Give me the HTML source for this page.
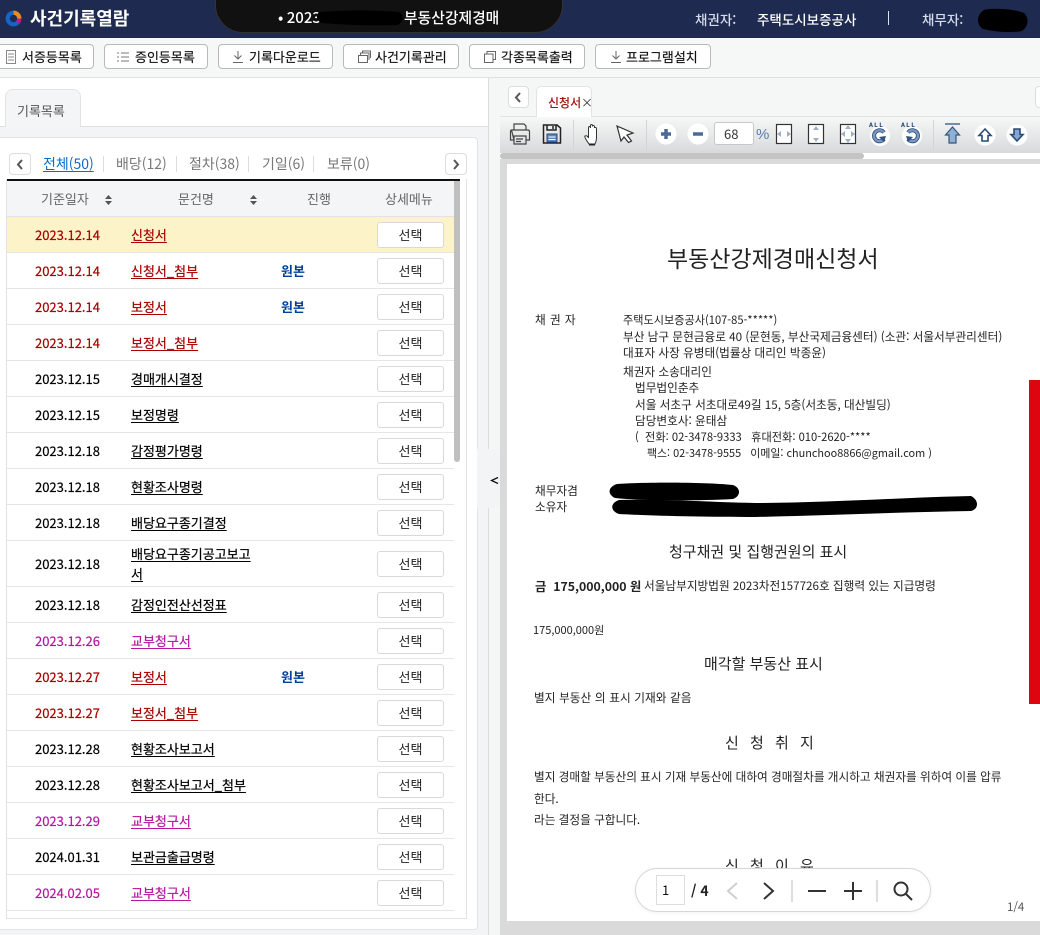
<!DOCTYPE html>
<html lang="ko"><head><meta charset="utf-8"><title>사건기록열람</title>
<style>
*{box-sizing:border-box}
html,body{margin:0;padding:0}
body{width:1040px;height:935px;position:relative;overflow:hidden;background:#f3f4f6;font-family:"Liberation Sans","Noto Sans CJK KR",sans-serif;color:#111}
.a,.t,.b,.d,.n,.s,.dt,.p{position:absolute;white-space:nowrap}
.k{font-family:"Noto Sans CJK KR","Liberation Sans",sans-serif}
.t{font-family:"Noto Sans CJK KR",sans-serif}
.b{top:44px;height:25px;background:#fff;border:1px solid #b9b9b9;border-radius:4px;font:13px/23px "Noto Sans CJK KR",sans-serif;color:#111;-webkit-text-stroke:.15px #111}
.b span{position:absolute;top:0}
.b svg{position:absolute;top:5px}
.l{position:absolute;left:7px;width:447px;height:1px;background:#e6e6e6}
.d{left:35px;font:13px/18px "Noto Sans CJK KR",sans-serif;color:#000;-webkit-text-stroke:.2px currentColor}
.n{left:131px;font:13px/18px "Noto Sans CJK KR",sans-serif;color:#000;text-decoration:underline;text-underline-offset:2px;-webkit-text-stroke:.2px currentColor}
.s{left:377px;width:67px;height:26px;background:#fff;border:1px solid #d9d9d9;border-radius:3px;font:13px/24px "Noto Sans CJK KR",sans-serif;text-align:center;color:#222}
.w{position:absolute;left:281px;font:bold 13px/18px "Noto Sans CJK KR",sans-serif;color:#003f9a}
.r{color:#a60000!important}
.m{color:#b3179f!important}
.p{font:11.65px/14px "Noto Sans CJK KR",sans-serif;color:#222}
.h{position:absolute;font:15px/20px "Noto Sans CJK KR",sans-serif;color:#222;white-space:nowrap}
.sep{position:absolute;top:156px;width:1px;height:16px;background:#ddd}
.ic{position:absolute}
</style></head><body>

<!-- header -->
<div class="a" style="left:0;top:0;width:1040px;height:38px;background:#1e2a50"></div>
<svg class="ic" style="left:5px;top:10px" width="17" height="17" viewBox="0 0 17 17"><circle cx="8.5" cy="8.5" r="5.8" fill="none" stroke="#1565c8" stroke-width="4.2"/><path d="M8.5 2.7A5.8 5.8 0 0 1 14.3 8.5" fill="none" stroke="#f08a12" stroke-width="4.2"/><path d="M14.3 8.5A5.8 5.8 0 0 1 12.500 12.700" fill="none" stroke="#c0188c" stroke-width="4.2"/></svg>
<div class="t" style="left:30px;top:6px;font-size:18px;line-height:25px;font-weight:700;color:#fff">사건기록열람</div>
<div class="a" style="left:215px;top:-30px;width:348px;height:63px;background:#111;border-radius:0 0 28px 28px;border:1px solid #333"></div>
<div class="t" style="left:278px;top:8px;font-size:15px;line-height:20px;color:#fff;font-weight:500">• 2023</div>
<svg class="ic" style="left:315px;top:8px" width="92" height="20"><path d="M4 4C30 2 60 2 84 4C90 8 88 15 82 17C60 18 30 17 6 15C1 12 1 7 4 4Z" fill="#000"/></svg>
<div class="t" style="left:404px;top:8px;font-size:14.8px;line-height:20px;color:#fff;font-weight:500">부동산강제경매</div>
<div class="t" style="left:695px;top:9px;font-size:13.5px;line-height:20px;color:#d5dcec;font-weight:500">채권자:</div>
<div class="t" style="left:757px;top:9px;font-size:13.5px;line-height:20px;color:#fff;font-weight:500">주택도시보증공사</div>
<div class="a" style="left:888px;top:11px;width:1px;height:14px;background:#dfe3ee"></div>
<div class="t" style="left:922px;top:9px;font-size:13.5px;line-height:20px;color:#d5dcec;font-weight:500">채무자:</div>
<svg class="ic" style="left:975px;top:7px" width="56" height="27"><path d="M10 2.500C22 1 40 2 49 6C54 11 54 19 47 24C36 26 20 25 8 22C1 18 1 7 10 2.500Z" fill="#000"/></svg>

<!-- toolbar -->
<div class="a" style="left:0;top:38px;width:1040px;height:40px;background:#f6f8f7;border-bottom:1px solid #dfe1e1"></div>
<div class="b" style="left:-4px;width:98px"><svg style="left:9px" width="10" height="14" viewBox="0 0 10 14" fill="none" stroke="#888"><rect x=".5" y=".5" width="9" height="13"/><path d="M2 4H8M2 7H8M2 10H8"/></svg><span style="left:25px">서증등목록</span></div>
<div class="b" style="left:104px;width:104px"><svg style="left:12px;top:6px" width="12" height="12" viewBox="0 0 12 12" fill="none" stroke="#777"><path d="M0 2H2M4 2H12M0 6H2M4 6H12M0 10H2M4 10H12"/></svg><span style="left:30px">증인등목록</span></div>
<div class="b" style="left:218px;width:115px"><svg style="left:13px" width="12" height="14" viewBox="0 0 12 14" fill="none" stroke="#666"><path d="M6 1V9M2.500 5.500L6 9L9.500 5.500M1 12.500H11"/></svg><span style="left:30px">기록다운로드</span></div>
<div class="b" style="left:343px;width:116px"><svg style="left:14px" width="13" height="13" viewBox="0 0 13 13" fill="none" stroke="#666"><path d="M.5 5.500H9.500V12.500H.5ZM2.500 5V3H11V10M4.500 3V1H12.500V8"/></svg><span style="left:31px">사건기록관리</span></div>
<div class="b" style="left:469px;width:116px"><svg style="left:14px;top:6px" width="12" height="12" viewBox="0 0 12 12" fill="none" stroke="#666"><path d="M3 3V.5H11.500V8.500H9M.5 3H9V11.500H.5Z"/></svg><span style="left:31px">각종목록출력</span></div>
<div class="b" style="left:595px;width:116px"><svg style="left:14px" width="12" height="14" viewBox="0 0 12 14" fill="none" stroke="#666"><path d="M6 1V9M2.500 5.500L6 9L9.500 5.500M1 12.500H11"/></svg><span style="left:30px">프로그램설치</span></div>

<!-- left panel -->
<div class="a" style="left:0;top:78px;width:488px;height:48px;background:#fff"></div>
<div class="a" style="left:0;top:126px;width:488px;height:1px;background:#dfe1e1"></div>
<div class="a" style="left:5px;top:89px;width:76px;height:38px;background:#f4f5f6;border:1px solid #e2e4e4;border-bottom:0;border-radius:8px 8px 0 0"></div>
<div class="t" style="left:17px;top:101px;font-size:13px;line-height:20px;color:#555">기록목록</div>
<div class="a" style="left:-4px;top:137px;width:482px;height:793px;background:#fff;border:1px solid #e3e4e6;border-radius:4px"></div>

<div class="a" style="left:9px;top:153px;width:22px;height:22px;background:#fff;border:1px solid #ddd;border-radius:4px"></div>
<svg class="ic" style="left:16px;top:159px" width="8" height="11" fill="none" stroke="#555" stroke-width="2"><path d="M6 1L2 5.500L6 10"/></svg>
<div class="a" style="left:445px;top:153px;width:22px;height:22px;background:#fff;border:1px solid #ddd;border-radius:4px"></div>
<svg class="ic" style="left:452px;top:159px" width="8" height="11" fill="none" stroke="#555" stroke-width="2"><path d="M2 1L6 5.500L2 10"/></svg>
<div class="h" style="left:43px;top:154px;font-size:14px;color:#0a6cc4;text-decoration:underline;text-underline-offset:2px">전체(50)</div>
<div class="sep" style="left:103px"></div>
<div class="h" style="left:116px;top:154px;font-size:14px;color:#777">배당(12)</div>
<div class="sep" style="left:176px"></div>
<div class="h" style="left:189px;top:154px;font-size:14px;color:#777">절차(38)</div>
<div class="sep" style="left:248px"></div>
<div class="h" style="left:262px;top:154px;font-size:14px;color:#777">기일(6)</div>
<div class="sep" style="left:313px"></div>
<div class="h" style="left:327px;top:154px;font-size:14px;color:#777">보류(0)</div>

<!-- table -->
<div class="a" style="left:6px;top:179px;width:461px;height:740px;background:#fff;border:1px solid #e2e2e2;border-top:0"></div>
<div class="a" style="left:7px;top:179px;width:453px;height:2px;background:#111"></div>
<div class="a" style="left:7px;top:181px;width:447px;height:36px;background:#f4f5f6;border-bottom:1px solid #e3e3e3"></div>
<div class="t" style="left:41px;top:190px;font-size:13px;line-height:18px;color:#666">기준일자</div>
<svg class="ic" style="left:104px;top:194px" width="9" height="12" fill="#555"><path d="M4.500 1L8 5H1ZM1 7H8L4.500 11Z"/></svg>
<div class="t" style="left:178px;top:190px;font-size:13px;line-height:18px;color:#666">문건명</div>
<svg class="ic" style="left:249px;top:194px" width="9" height="12" fill="#555"><path d="M4.500 1L8 5H1ZM1 7H8L4.500 11Z"/></svg>
<div class="t" style="left:307px;top:190px;font-size:13px;line-height:18px;color:#666">진행</div>
<div class="t" style="left:385px;top:190px;font-size:13px;line-height:18px;color:#666">상세메뉴</div>
<div class="a" style="left:454px;top:181px;width:6px;height:281px;background:#bfbfbf;border-radius:0 0 3px 3px"></div>
<div class="a" style="left:7px;top:217px;width:447px;height:35px;background:#fdf3c8"></div>

<div class="l" style="top:252px"></div><div class="l" style="top:288px"></div><div class="l" style="top:324px"></div><div class="l" style="top:360px"></div><div class="l" style="top:396px"></div><div class="l" style="top:432px"></div><div class="l" style="top:468px"></div><div class="l" style="top:504px"></div><div class="l" style="top:540px"></div><div class="l" style="top:586px"></div><div class="l" style="top:622px"></div><div class="l" style="top:658px"></div><div class="l" style="top:694px"></div><div class="l" style="top:730px"></div><div class="l" style="top:766px"></div><div class="l" style="top:802px"></div><div class="l" style="top:838px"></div><div class="l" style="top:874px"></div><div class="l" style="top:910px"></div>

<div class="d r" style="top:226px">2023.12.14</div><div class="n r" style="top:226px">신청서</div><div class="s" style="top:222px">선택</div>
<div class="d r" style="top:262px">2023.12.14</div><div class="n r" style="top:262px">신청서_첨부</div><div class="w" style="top:262px">원본</div><div class="s" style="top:258px">선택</div>
<div class="d r" style="top:298px">2023.12.14</div><div class="n r" style="top:298px">보정서</div><div class="w" style="top:298px">원본</div><div class="s" style="top:294px">선택</div>
<div class="d r" style="top:334px">2023.12.14</div><div class="n r" style="top:334px">보정서_첨부</div><div class="s" style="top:330px">선택</div>
<div class="d" style="top:370px">2023.12.15</div><div class="n" style="top:370px">경매개시결정</div><div class="s" style="top:366px">선택</div>
<div class="d" style="top:406px">2023.12.15</div><div class="n" style="top:406px">보정명령</div><div class="s" style="top:402px">선택</div>
<div class="d" style="top:442px">2023.12.18</div><div class="n" style="top:442px">감정평가명령</div><div class="s" style="top:438px">선택</div>
<div class="d" style="top:478px">2023.12.18</div><div class="n" style="top:478px">현황조사명령</div><div class="s" style="top:474px">선택</div>
<div class="d" style="top:514px">2023.12.18</div><div class="n" style="top:514px">배당요구종기결정</div><div class="s" style="top:510px">선택</div>
<div class="d" style="top:555px">2023.12.18</div><div class="n" style="top:545px">배당요구종기공고보고</div><div class="n" style="top:565px">서</div><div class="s" style="top:551px">선택</div>
<div class="d" style="top:596px">2023.12.18</div><div class="n" style="top:596px">감정인전산선정표</div><div class="s" style="top:592px">선택</div>
<div class="d m" style="top:632px">2023.12.26</div><div class="n m" style="top:632px">교부청구서</div><div class="s" style="top:628px">선택</div>
<div class="d r" style="top:668px">2023.12.27</div><div class="n r" style="top:668px">보정서</div><div class="w" style="top:668px">원본</div><div class="s" style="top:664px">선택</div>
<div class="d r" style="top:704px">2023.12.27</div><div class="n r" style="top:704px">보정서_첨부</div><div class="s" style="top:700px">선택</div>
<div class="d" style="top:740px">2023.12.28</div><div class="n" style="top:740px">현황조사보고서</div><div class="s" style="top:736px">선택</div>
<div class="d" style="top:776px">2023.12.28</div><div class="n" style="top:776px">현황조사보고서_첨부</div><div class="s" style="top:772px">선택</div>
<div class="d m" style="top:812px">2023.12.29</div><div class="n m" style="top:812px">교부청구서</div><div class="s" style="top:808px">선택</div>
<div class="d" style="top:848px">2024.01.31</div><div class="n" style="top:848px">보관금출급명령</div><div class="s" style="top:844px">선택</div>
<div class="d m" style="top:884px">2024.02.05</div><div class="n m" style="top:884px">교부청구서</div><div class="s" style="top:880px">선택</div>

<!-- splitter -->
<div class="a" style="left:488px;top:78px;width:12px;height:857px;background:#f5f7f6;border-left:1px solid #dcdcdc"></div>
<div class="a" style="left:477px;top:449px;width:25px;height:59px;background:#f3f4f6;border-radius:0 5px 5px 0"></div>
<svg class="ic" style="left:490px;top:476px" width="9" height="9" fill="none" stroke="#111" stroke-width="1.300"><path d="M8 1.500L1.500 4.500L8 7.500"/></svg>

<!-- viewer -->
<div class="a" style="left:500px;top:78px;width:540px;height:39px;background:#f5f7f6;border-bottom:1px solid #e1e3e3"></div>
<div class="a" style="left:508px;top:86px;width:21px;height:22px;background:#fff;border:1px solid #ddd;border-radius:4px"></div>
<svg class="ic" style="left:514px;top:92px" width="8" height="11" fill="none" stroke="#555" stroke-width="2"><path d="M6 1L2 5.500L6 10"/></svg>
<div class="a" style="left:536px;top:86px;width:56px;height:32px;background:#fff;border:1px solid #e2e4e4;border-bottom:0;border-radius:5px 5px 0 0"></div>
<div class="t" style="left:548px;top:94px;font-size:12px;line-height:17px;color:#a61212;font-weight:500">신청서</div>
<div class="t" style="left:581px;top:94px;font-size:12px;line-height:17px;color:#333">×</div>
<div class="a" style="left:1035px;top:86px;width:10px;height:22px;background:#fff;border:1px solid #ddd;border-radius:4px"></div>
<div class="a" style="left:500px;top:117px;width:540px;height:36px;background:linear-gradient(#f6f7f7,#d7dadb)"></div>
<div class="a" style="left:500px;top:153px;width:540px;height:6px;background:#fff"></div>
<div class="a" style="left:500px;top:153px;width:364px;height:6px;background:#c4c4c4;border-radius:3px"></div>
<div class="a" style="left:500px;top:159px;width:540px;height:776px;background:#dadada"></div>
<div class="a" style="left:507px;top:164px;width:533px;height:757px;background:#fff"></div>
<div class="a" style="left:1029px;top:380px;width:11px;height:324px;background:#dc0510"></div>

<!-- viewer toolbar icons -->
<svg class="ic" style="left:500px;top:117px" width="540" height="36" viewBox="0 0 540 36">
<g fill="none" stroke="#444" stroke-width="1.200">
<path d="M14 13V7H24L26 9V13M11.500 13H28Q29.500 13 29.500 15V23H26M14 23H10.500V15Q10.500 13 11.500 13ZM14 19H26V27H14ZM16 22H23M16 24.500H21"/>
<path d="M43.500 8H57L60.500 11V26H43.500ZM47 8V13H56V8M53 9V12" stroke="#222" stroke-width="1.500"/>
</g>
<rect x="47" y="17" width="10" height="8" fill="#5b88bb" stroke="#274a78"/><path d="M48.500 20H55.500M48.500 22.500H55.500" stroke="#fff"/>
<path d="M89 27C87 24 84 20 85 19C87 18 88 20 88.500 21V11C88.500 9 90.500 9 90.500 11V9C90.500 7 92.500 7 92.500 9V9.500C92.500 8 94.500 8 94.500 10V11C94.500 10 96.500 10 96.500 12V21C96.500 24 95.500 26 95 27Z" fill="#fff" stroke="#333"/><path d="M89 27.500H95" stroke="#222" stroke-width="2"/>
<path d="M117 9L133 16L127 18L131.500 24L128.500 25.500L124 20L121 24Z" fill="#fff" stroke="#333" stroke-width="1.200"/>
<path d="M73.500 3V33M146.500 3V33M433.500 3V33" stroke="#d2d5d6"/>
<circle cx="166" cy="17" r="10.500" fill="#fff"/><path d="M166 12V22M161 17H171" stroke="#4c6a94" stroke-width="3.500"/>
<circle cx="198" cy="17" r="10.500" fill="#fff"/><path d="M193 17H203" stroke="#4c6a94" stroke-width="3.500"/>
<text x="256" y="22" font-family="Liberation Sans,sans-serif" font-size="15" fill="#5c7ca8">%</text>
<g fill="#fff" stroke="#333" stroke-width="1.200"><rect x="276.500" y="7.500" width="15" height="19"/><rect x="308.500" y="7.500" width="15" height="19"/><rect x="340.500" y="7.500" width="15" height="19"/></g>
<g fill="#9eb0c8"><path d="M277 17L281 14V20ZM291 17L287 14V20ZM316 9L313 13H319ZM316 25L313 21H319ZM348 8L345 12H351ZM348 26L345 22H351ZM341 17L345 14V20ZM355 17L351 14V20Z"/></g>
<circle cx="380" cy="19" r="10" fill="#fff"/><circle cx="412" cy="19" r="10" fill="#fff"/>
<g fill="none" stroke="#31517f" stroke-width="4"><path d="M384 15.500A5.500 5.500 0 1 0 384 22"/><path d="M408 15.500A5.500 5.500 0 1 1 408 22"/></g>
<g fill="none" stroke="#7c9ac2" stroke-width="2.200"><path d="M384 15.500A5.500 5.500 0 1 0 384 22"/><path d="M408 15.500A5.500 5.500 0 1 1 408 22"/></g>
<path d="M379 20L386 19L384 25ZM413 20L406 19L408 25Z" fill="#31517f"/>
<text x="369" y="10" font-family="Liberation Mono,monospace" font-weight="700" font-size="6.500" fill="#24416e" textLength="14">ALL</text>
<text x="401" y="10" font-family="Liberation Mono,monospace" font-weight="700" font-size="6.500" fill="#24416e" textLength="14">ALL</text>
<path d="M445 7H460" stroke="#36557f" stroke-width="1.300"/>
<path d="M452.500 10L459.500 18H456V26H449V18H445.500Z" fill="#8fb0d6" stroke="#34537c" stroke-width="1.200"/>
<circle cx="485" cy="18" r="10.500" fill="#fff"/><path d="M485 12L491 18.500H488V24H482V18.500H479Z" fill="#fff" stroke="#274a78" stroke-width="1.600"/>
<circle cx="517" cy="18" r="10.500" fill="#fff"/><path d="M517 24L523 17.500H520V12H514V17.500H511Z" fill="#86a6cf" stroke="#274a78" stroke-width="1.600"/>
</svg>
<div class="a k" style="left:714px;top:122px;width:40px;height:23px;background:#fff;border:1px solid #c8c8c8;border-radius:3px;font-size:13px;line-height:21px;padding-left:9px;color:#333">68</div>

<!-- document -->
<div class="p" style="left:667px;top:242px;font-size:23px;line-height:30px;color:#222">부동산강제경매신청서</div>
<div class="p" style="left:535px;top:313px;word-spacing:1px">채 권 자</div>
<div class="p" style="left:623px;top:313px;font-size:11.15px">주택도시보증공사(107-85-*****)</div>
<div class="p" style="left:623px;top:330px">부산 남구 문현금융로 40 (문현동, 부산국제금융센터) (소관: 서울서부관리센터)</div>
<div class="p" style="left:623px;top:346px">대표자 사장 유병태(법률상 대리인 박종윤)</div>
<div class="p" style="left:623px;top:365px">채권자 소송대리인</div>
<div class="p" style="left:635px;top:381px">법무법인춘추</div>
<div class="p" style="left:635px;top:398px">서울 서초구 서초대로49길 15, 5층(서초동, 대산빌딩)</div>
<div class="p" style="left:635px;top:414px">담당변호사: 윤태삼</div>
<div class="p" style="left:635px;top:430px;font-size:11.2px">(&nbsp; 전화: 02-3478-9333 &nbsp; 휴대전화: 010-2620-****</div>
<div class="p" style="left:647px;top:446px;font-size:10.9px">팩스: 02-3478-9555 &nbsp; 이메일: chunchoo8866@gmail.com )</div>
<div class="p" style="left:535px;top:484px">채무자겸</div>
<div class="p" style="left:535px;top:500px">소유자</div>
<svg class="ic" style="left:605px;top:478px" width="380" height="44"><path d="M12 6C40 4 100 4 128 7C136 10 136 18 128 21C90 23 40 23 10 20C2 16 3 9 12 6Z" fill="#000"/><path d="M14 22C60 21 100 24 150 25C220 25 310 19 366 18C374 22 374 31 366 33C300 34 230 37 150 39C100 39 50 38 14 36C5 33 5 25 14 22Z" fill="#000"/></svg>
<div class="p" style="left:669px;top:542px;font-size:15px;line-height:20px">청구채권 및 집행권원의 표시</div>
<div class="p" style="left:535px;top:578px;font-size:12.3px;line-height:16px;font-weight:700">금 &nbsp;175,000,000 원</div>
<div class="p" style="left:644px;top:579px">서울남부지방법원 2023차전157726호 집행력 있는 지급명령</div>
<div class="p" style="left:533px;top:623px;font-size:11px">175,000,000원</div>
<div class="p" style="left:704px;top:654px;font-size:15px;line-height:20px">매각할 부동산 표시</div>
<div class="p" style="left:534px;top:691px;word-spacing:.4px">별지 부동산 의 표시 기재와 같음</div>
<div class="p" style="left:725px;top:733px;font-size:15px;line-height:20px;letter-spacing:3.500px">신 청 취 지</div>
<div class="p" style="left:534px;top:770px">별지 경매할 부동산의 표시 기재 부동산에 대하여 경매절차를 개시하고 채권자를 위하여 이를 압류</div>
<div class="p" style="left:534px;top:792px">한다.</div>
<div class="p" style="left:534px;top:813px">라는 결정을 구합니다.</div>
<div class="p" style="left:725px;top:856px;font-size:15px;line-height:20px;letter-spacing:3.500px">신 청 이 유</div>
<div class="p" style="left:1007px;top:900px;font-size:11.500px;color:#555">1/4</div>

<!-- pdf pill -->
<div class="a" style="left:635px;top:868px;width:296px;height:44px;background:#fff;border:1px solid #d6d6d6;border-radius:22px;box-shadow:0 1px 4px rgba(0,0,0,.05)"></div>
<div class="a k" style="left:656px;top:875px;width:29px;height:30px;background:#fff;border:1px solid #ddd;font-size:13px;line-height:28px;padding-left:5px;color:#111">1</div>
<div class="a k" style="left:691px;top:881px;font-size:14px;line-height:20px;font-weight:700;color:#222">/ 4</div>
<svg class="ic" style="left:720px;top:878px" width="215" height="26" viewBox="0 0 215 26" fill="none" stroke-width="2">
<path d="M17 5L8 13L17 21" stroke="#cfcfcf"/><path d="M44 5L53 13L44 21" stroke="#333"/>
<path d="M72 2V24M157 2V24" stroke="#dedede"/>
<path d="M88 13H106M124 13H142M133 4V22" stroke="#333"/>
<circle cx="181" cy="11" r="6.500" stroke="#333"/><path d="M186 16L192 22" stroke="#333"/>
</svg>
</body></html>
